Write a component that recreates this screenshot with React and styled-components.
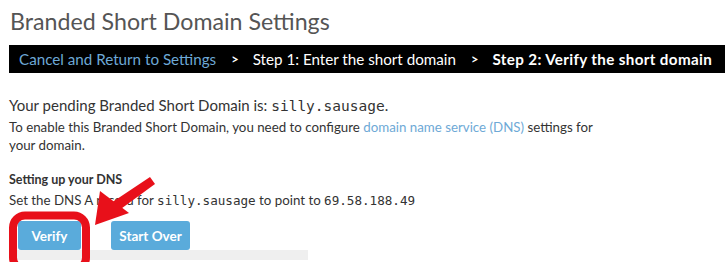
import React from "react";
import styled, { createGlobalStyle } from "styled-components";

const Global = createGlobalStyle`
  html, body { margin: 0; padding: 0; background: #fff; }
  body { font-family: Lato, "Open Sans", sans-serif; color: #333; overflow: hidden; }
`;

const Page = styled.div`
  position: relative;
  width: 727px;
  height: 262px;
  padding: 0 0 0 9px;
  box-sizing: border-box;
  overflow: hidden;
`;

const Title = styled.h1`
  margin: 0;
  padding: 6px 0 0 1px;
  font-size: 23.2px;
  font-weight: 400;
  color: #555;
  line-height: 30px;
`;

const Crumbs = styled.div`
  margin-top: 9px;
  height: 28px;
  width: 716px;
  background: #000;
  display: flex;
  align-items: center;
  padding-left: 10px;
  box-sizing: border-box;
  font-size: 15.2px;
  color: #fff;
`;

const CrumbLink = styled.span`
  color: #6ea9d6;
`;

const Sep = styled.span`
  margin: 0 14px 0 15px;
  font-weight: 700;
  font-size: 13px;
`;

const Crumb = styled.span`
  font-weight: ${(p) => (p.$active ? 700 : 400)};
  letter-spacing: ${(p) => (p.$active ? "0.35px" : "0")};
`;

const Pending = styled.p`
  margin: 22px 0 0;
  font-size: 15px;
  line-height: 20px;
  color: #333;
`;

const Mono = styled.code`
  font-family: "DejaVu Sans Mono", "Liberation Mono", monospace;
  font-size: ${(p) => p.$size || 12.6}px;
  line-height: 1;
`;

const Body = styled.p`
  margin: ${(p) => p.$mt || 0}px 0 0;
  font-size: 13.3px;
  line-height: 18px;
  width: 600px;
  color: #333;
`;

const Link = styled.span`
  color: #6ea9d6;
`;

const SubHead = styled.h4`
  margin: 18px 0 0;
  font-size: 12.5px;
  font-weight: 700;
  line-height: 16px;
`;

const Buttons = styled.div`
  display: flex;
  gap: 30px;
  margin: 12px 0 0 9px;
`;

const Button = styled.button`
  height: 29px;
  width: ${(p) => p.$w}px;
  padding: 0;
  border: none;
  border-radius: 3px;
  background: #5aabdb;
  color: #fff;
  font-family: Lato, "Open Sans", sans-serif;
  font-size: 13.5px;
  font-weight: 700;
`;

const Strip = styled.div`
  width: 299px;
  height: 10px;
  background: #efefef;
`;

const Annotation = styled.svg`
  position: absolute;
  left: 0;
  top: 0;
  pointer-events: none;
`;

export default function App() {
  return (
    <>
      <Global />
      <Page>
        <Title>Branded Short Domain Settings</Title>
        <Crumbs>
          <CrumbLink>Cancel and Return to Settings</CrumbLink>
          <Sep>&gt;</Sep>
          <Crumb>Step 1: Enter the short domain</Crumb>
          <Sep>&gt;</Sep>
          <Crumb $active>Step 2: Verify the short domain</Crumb>
        </Crumbs>
        <Pending>
          Your pending Branded Short Domain is: <Mono $size={14.5}>silly.sausage</Mono>.
        </Pending>
        <Body $mt={3}>
          To enable this Branded Short Domain, you need to configure{" "}
          <Link>domain name service (DNS)</Link> settings for your domain.
        </Body>
        <SubHead>Setting up your DNS</SubHead>
        <Body $mt={3}>
          Set the DNS A record for <Mono>silly.sausage</Mono> to point to <Mono>69.58.188.49</Mono>
        </Body>
        <Buttons>
          <Button $w={63}>Verify</Button>
          <Button $w={79}>Start Over</Button>
        </Buttons>
        <Strip />
        <Annotation width="727" height="262" viewBox="0 0 727 262">
          <rect x="13" y="215.5" width="73" height="54" rx="12" fill="none" stroke="#e8101a" strokeWidth="8" />
          <polygon points="150,177 155,184 118,211 111,203" fill="#e8101a" />
          <polygon points="95,225 100,191 129,213" fill="#e8101a" />
        </Annotation>
      </Page>
    </>
  );
}
